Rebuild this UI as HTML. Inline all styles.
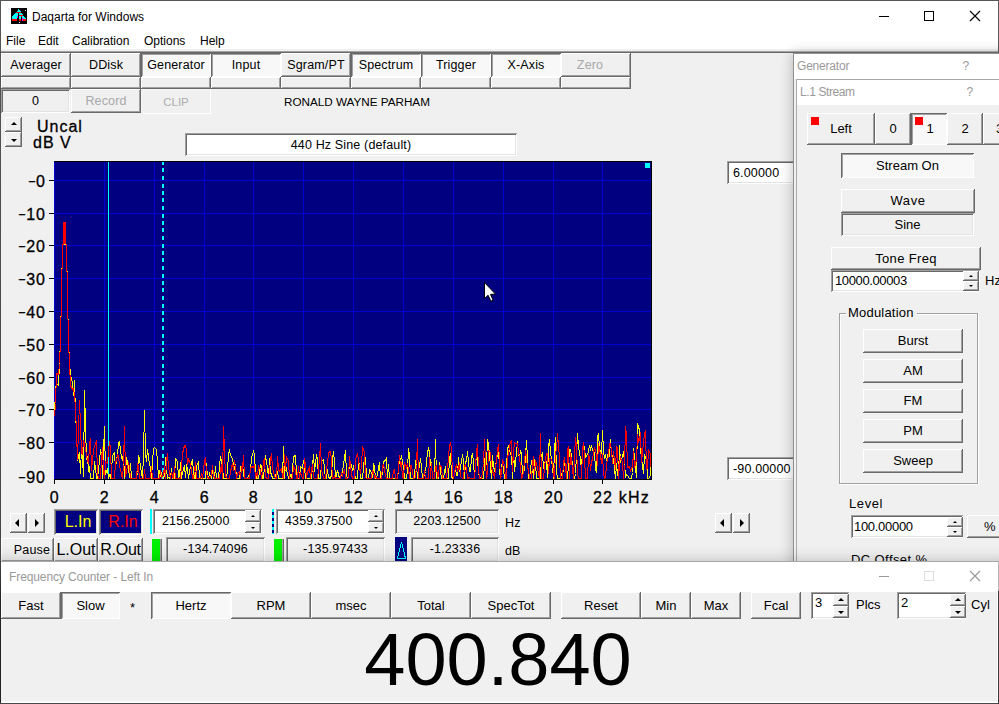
<!DOCTYPE html>
<html><head><meta charset="utf-8"><title>Daqarta for Windows</title>
<style>
html,body{margin:0;padding:0;}
body{width:999px;height:704px;overflow:hidden;position:relative;background:#f0f0f0;font-family:"Liberation Sans",sans-serif;color:#000;}
div,svg.x{position:absolute;}
.x{position:absolute;}
.t{position:absolute;white-space:nowrap;}
.b{position:absolute;text-align:center;white-space:nowrap;overflow:hidden;background:#f0f0f0;}
.r{box-shadow:inset -1px -1px 0 #696969,inset 1px 1px 0 #fff,inset -2px -2px 0 #a0a0a0;}
.p{background:#f8f8f8;box-shadow:inset 1px 1px 0 #696969,inset -1px -1px 0 #fff,inset 2px 2px 0 #a0a0a0;}
.s{box-shadow:inset 1px 1px 0 #a0a0a0,inset -1px -1px 0 #fff,inset 2px 2px 0 #696969,inset -2px -2px 0 #e3e3e3;}
.e{background:#fff;box-shadow:inset 1px 1px 0 #a0a0a0,inset -1px -1px 0 #fff,inset 2px 2px 0 #696969,inset -2px -2px 0 #e3e3e3;}
.f{box-shadow:inset -1px -1px 0 #fff,inset 1px 1px 0 #f6f6f6;}
.tb{font-size:12.5px;letter-spacing:0.15px;}
.a16{font-size:16px;}
.ax{letter-spacing:1px;-webkit-text-stroke:0.3px #000;}
.mn{display:inline-block;transform:translate(1.2px,-1.6px) scale(1.5,0.75);transform-origin:100% 60%;}
.a13{font-size:13px;}
i{position:absolute;width:0;height:0;border:3px solid transparent;left:50%;top:50%;}
i.up{border-bottom:3px solid #000;border-top:0;margin:-2px 0 0 -3px;}
i.dn{border-top:3px solid #000;border-bottom:0;margin:-1px 0 0 -3px;}
i.up.s,i.dn.s{border-width:2px;}
i.up.s{border-bottom:2px solid #000;border-top:0;margin:-1px 0 0 -2px;}
i.dn.s{border-top:2px solid #000;border-bottom:0;margin:-1px 0 0 -2px;}
i.lf{border:4px solid transparent;border-right:4px solid #000;border-left:0;margin:-4px 0 0 -4px;}
i.rt{border:4px solid transparent;border-left:4px solid #000;border-right:0;margin:-4px 0 0 -2px;}
.ttl{font-size:12px;}
</style></head><body>
<!-- main window title + menu -->
<div style="left:0;top:0;width:999px;height:52px;background:#fff;"></div>
<div style="left:0;top:0;width:999px;height:1px;background:#555;"></div>
<div style="left:0;top:0;width:1px;height:704px;background:linear-gradient(#555 0,#444 560px,#222 600px,#222);"></div>
<div style="left:1px;top:562px;width:1px;height:140px;background:#fff;"></div>
<div style="left:998px;top:0;width:1px;height:54px;background:#5a5a5a;"></div>
<div style="left:1px;top:49px;width:997px;height:2px;background:#f0f0f0;"></div>
<div style="left:1px;top:51px;width:997px;height:1px;background:#a0a0a0;"></div>
<div style="left:1px;top:52px;width:998px;height:1px;background:#696969;"></div>
<svg class="x" style="left:11px;top:8px" width="16" height="16" shape-rendering="crispEdges"><rect width="16" height="16" fill="#000"/><rect x="7" y="1" width="1" height="1" fill="#00ffff"/><rect x="7" y="2" width="2" height="1" fill="#00ffff"/><rect x="14" y="2" width="1" height="1" fill="#ffffff"/><rect x="6" y="3" width="4" height="1" fill="#00ffff"/><rect x="5" y="4" width="5" height="1" fill="#ff0000"/><rect x="4" y="5" width="3" height="1" fill="#00ffff"/><rect x="8" y="5" width="3" height="1" fill="#00ffff"/><rect x="3" y="6" width="4" height="1" fill="#00ffff"/><rect x="8" y="6" width="4" height="1" fill="#00ffff"/><rect x="2" y="7" width="5" height="1" fill="#00ffff"/><rect x="8" y="7" width="4" height="1" fill="#ff0000"/><rect x="1" y="8" width="5" height="1" fill="#00ffff"/><rect x="6" y="8" width="1" height="1" fill="#ff00ff"/><rect x="8" y="8" width="2" height="1" fill="#00ffff"/><rect x="10" y="8" width="1" height="1" fill="#ff0000"/><rect x="11" y="8" width="2" height="1" fill="#00ffff"/><rect x="1" y="9" width="5" height="1" fill="#00ffff"/><rect x="6" y="9" width="1" height="1" fill="#ff00ff"/><rect x="8" y="9" width="2" height="1" fill="#00ffff"/><rect x="11" y="9" width="3" height="1" fill="#00ffff"/><rect x="1" y="10" width="5" height="1" fill="#00ffff"/><rect x="8" y="10" width="2" height="1" fill="#00ffff"/><rect x="11" y="10" width="1" height="1" fill="#ff00ff"/><rect x="12" y="10" width="3" height="1" fill="#00ffff"/><rect x="1" y="11" width="5" height="1" fill="#ff0000"/><rect x="8" y="11" width="2" height="1" fill="#ff0000"/><rect x="11" y="11" width="1" height="1" fill="#ff00ff"/><rect x="12" y="11" width="3" height="1" fill="#ff0000"/><rect x="1" y="12" width="5" height="1" fill="#ff0000"/><rect x="8" y="12" width="2" height="1" fill="#ff0000"/><rect x="11" y="12" width="1" height="1" fill="#ff00ff"/><rect x="12" y="12" width="3" height="1" fill="#ff0000"/><rect x="8" y="14" width="1" height="1" fill="#ffffff"/></svg>
<div class="t ttl" style="left:32px;top:10px;">Daqarta for Windows</div>
<div class="t ttl" style="left:6px;top:34px;">File</div>
<div class="t ttl" style="left:38px;top:34px;">Edit</div>
<div class="t ttl" style="left:72px;top:34px;">Calibration</div>
<div class="t ttl" style="left:144px;top:34px;">Options</div>
<div class="t ttl" style="left:200px;top:34px;">Help</div>
<svg class="x" style="left:870px;top:5px" width="120" height="24" shape-rendering="crispEdges"><rect x="9" y="11" width="10" height="1" fill="#000"/><rect x="54.5" y="6.5" width="9" height="9" fill="none" stroke="#000"/><path d="M100 6 L110 16 M110 6 L100 16" stroke="#000" stroke-width="1.1" shape-rendering="auto"/></svg>
<svg style="position:absolute;left:0;top:0" width="999" height="704" shape-rendering="crispEdges">
<rect x="54" y="161" width="598" height="319" fill="#000080"/>
<rect x="54" y="180" width="598" height="1" fill="#0000d2"/><rect x="54" y="213" width="598" height="1" fill="#0000d2"/><rect x="54" y="245" width="598" height="1" fill="#0000d2"/><rect x="54" y="278" width="598" height="1" fill="#0000d2"/><rect x="54" y="311" width="598" height="1" fill="#0000d2"/><rect x="54" y="344" width="598" height="1" fill="#0000d2"/><rect x="54" y="377" width="598" height="1" fill="#0000d2"/><rect x="54" y="409" width="598" height="1" fill="#0000d2"/><rect x="54" y="442" width="598" height="1" fill="#0000d2"/><rect x="54" y="161" width="1" height="319" fill="#0000d2"/><rect x="104" y="161" width="1" height="319" fill="#0000d2"/><rect x="154" y="161" width="1" height="319" fill="#0000d2"/><rect x="204" y="161" width="1" height="319" fill="#0000d2"/><rect x="253" y="161" width="1" height="319" fill="#0000d2"/><rect x="303" y="161" width="1" height="319" fill="#0000d2"/><rect x="353" y="161" width="1" height="319" fill="#0000d2"/><rect x="403" y="161" width="1" height="319" fill="#0000d2"/><rect x="453" y="161" width="1" height="319" fill="#0000d2"/><rect x="503" y="161" width="1" height="319" fill="#0000d2"/><rect x="553" y="161" width="1" height="319" fill="#0000d2"/><rect x="602" y="161" width="1" height="319" fill="#0000d2"/>
<rect x="108" y="161" width="1" height="319" fill="#00ffff"/>
<rect x="162" y="161" width="2" height="4" fill="#00ffff"/><rect x="162" y="168" width="2" height="4" fill="#00ffff"/><rect x="162" y="176" width="2" height="4" fill="#00ffff"/><rect x="162" y="184" width="2" height="4" fill="#00ffff"/><rect x="162" y="191" width="2" height="4" fill="#00ffff"/><rect x="162" y="198" width="2" height="4" fill="#00ffff"/><rect x="162" y="206" width="2" height="4" fill="#00ffff"/><rect x="162" y="214" width="2" height="4" fill="#00ffff"/><rect x="162" y="221" width="2" height="4" fill="#00ffff"/><rect x="162" y="228" width="2" height="4" fill="#00ffff"/><rect x="162" y="236" width="2" height="4" fill="#00ffff"/><rect x="162" y="244" width="2" height="4" fill="#00ffff"/><rect x="162" y="251" width="2" height="4" fill="#00ffff"/><rect x="162" y="258" width="2" height="4" fill="#00ffff"/><rect x="162" y="266" width="2" height="4" fill="#00ffff"/><rect x="162" y="274" width="2" height="4" fill="#00ffff"/><rect x="162" y="281" width="2" height="4" fill="#00ffff"/><rect x="162" y="288" width="2" height="4" fill="#00ffff"/><rect x="162" y="296" width="2" height="4" fill="#00ffff"/><rect x="162" y="304" width="2" height="4" fill="#00ffff"/><rect x="162" y="311" width="2" height="4" fill="#00ffff"/><rect x="162" y="318" width="2" height="4" fill="#00ffff"/><rect x="162" y="326" width="2" height="4" fill="#00ffff"/><rect x="162" y="334" width="2" height="4" fill="#00ffff"/><rect x="162" y="341" width="2" height="4" fill="#00ffff"/><rect x="162" y="348" width="2" height="4" fill="#00ffff"/><rect x="162" y="356" width="2" height="4" fill="#00ffff"/><rect x="162" y="364" width="2" height="4" fill="#00ffff"/><rect x="162" y="371" width="2" height="4" fill="#00ffff"/><rect x="162" y="378" width="2" height="4" fill="#00ffff"/><rect x="162" y="386" width="2" height="4" fill="#00ffff"/><rect x="162" y="394" width="2" height="4" fill="#00ffff"/><rect x="162" y="401" width="2" height="4" fill="#00ffff"/><rect x="162" y="408" width="2" height="4" fill="#00ffff"/><rect x="162" y="416" width="2" height="4" fill="#00ffff"/><rect x="162" y="424" width="2" height="4" fill="#00ffff"/><rect x="162" y="431" width="2" height="4" fill="#00ffff"/><rect x="162" y="438" width="2" height="4" fill="#00ffff"/><rect x="162" y="446" width="2" height="4" fill="#00ffff"/><rect x="162" y="454" width="2" height="4" fill="#00ffff"/><rect x="162" y="461" width="2" height="4" fill="#00ffff"/><rect x="162" y="468" width="2" height="4" fill="#00ffff"/><rect x="162" y="476" width="2" height="4" fill="#00ffff"/>
<polyline points="54.5,415.5 55.5,389.5 56.5,383.5 58.5,385.5 59.5,362.5 60.5,339.5 61.5,294.5 62.5,243.5 63.5,223.5 65.5,223.5 66.5,245.5 67.5,294.5 68.5,341.5 69.5,362.5 70.5,374.5 72.5,383.5 73.5,395.5 74.5,380.5 75.5,414.5 76.5,431.5 77.5,460.5 79.5,452.5 80.5,473.5 81.5,446.5 82.5,458.5 83.5,476.5 84.5,390.5 86.5,459.5 87.5,456.5 88.5,471.5 89.5,466.5 90.5,478.5 91.5,478.5 93.5,478.5 94.5,461.5 95.5,467.5 96.5,478.5 97.5,478.5 98.5,470.5 100.5,449.5 101.5,453.5 102.5,478.5 103.5,451.5 104.5,426.5 105.5,474.5 107.5,468.5 108.5,478.5 109.5,475.5 110.5,478.5 111.5,470.5 112.5,455.5 114.5,452.5 115.5,468.5 116.5,459.5 117.5,455.5 118.5,442.5 119.5,441.5 121.5,457.5 122.5,459.5 123.5,453.5 124.5,478.5 125.5,473.5 126.5,457.5 128.5,467.5 129.5,477.5 130.5,463.5 131.5,478.5 132.5,478.5 133.5,478.5 135.5,478.5 136.5,477.5 137.5,472.5 138.5,456.5 139.5,458.5 140.5,466.5 142.5,478.5 143.5,454.5 144.5,410.5 145.5,453.5 146.5,461.5 147.5,449.5 149.5,464.5 150.5,467.5 151.5,478.5 152.5,461.5 153.5,448.5 154.5,447.5 156.5,449.5 157.5,461.5 158.5,478.5 159.5,470.5 160.5,476.5 161.5,473.5 163.5,478.5 164.5,474.5 165.5,457.5 166.5,469.5 167.5,478.5 168.5,477.5 170.5,478.5 171.5,468.5 172.5,478.5 173.5,478.5 174.5,478.5 175.5,458.5 177.5,461.5 178.5,478.5 179.5,475.5 180.5,462.5 181.5,478.5 182.5,472.5 184.5,465.5 185.5,477.5 186.5,464.5 187.5,469.5 188.5,478.5 189.5,471.5 191.5,462.5 192.5,460.5 193.5,470.5 194.5,478.5 195.5,478.5 196.5,466.5 198.5,461.5 199.5,478.5 200.5,478.5 201.5,478.5 202.5,478.5 204.5,478.5 205.5,478.5 206.5,463.5 207.5,478.5 208.5,478.5 209.5,473.5 211.5,478.5 212.5,469.5 213.5,478.5 214.5,478.5 215.5,466.5 216.5,478.5 218.5,478.5 219.5,465.5 220.5,456.5 221.5,460.5 222.5,467.5 223.5,478.5 225.5,478.5 226.5,478.5 227.5,469.5 228.5,455.5 229.5,449.5 230.5,455.5 232.5,458.5 233.5,465.5 234.5,468.5 235.5,464.5 236.5,478.5 237.5,478.5 239.5,478.5 240.5,466.5 241.5,472.5 242.5,463.5 243.5,474.5 244.5,478.5 246.5,478.5 247.5,478.5 248.5,475.5 249.5,474.5 250.5,471.5 251.5,457.5 253.5,451.5 254.5,454.5 255.5,472.5 256.5,478.5 257.5,478.5 258.5,478.5 260.5,464.5 261.5,465.5 262.5,478.5 263.5,478.5 264.5,465.5 265.5,455.5 267.5,467.5 268.5,478.5 269.5,458.5 270.5,472.5 271.5,474.5 272.5,478.5 274.5,478.5 275.5,478.5 276.5,470.5 277.5,471.5 278.5,478.5 279.5,478.5 281.5,478.5 282.5,478.5 283.5,446.5 284.5,478.5 285.5,463.5 286.5,469.5 288.5,478.5 289.5,478.5 290.5,475.5 291.5,477.5 292.5,470.5 293.5,456.5 295.5,455.5 296.5,473.5 297.5,478.5 298.5,478.5 299.5,478.5 300.5,466.5 302.5,468.5 303.5,460.5 304.5,466.5 305.5,478.5 306.5,478.5 307.5,478.5 309.5,478.5 310.5,478.5 311.5,478.5 312.5,465.5 313.5,454.5 314.5,471.5 316.5,454.5 317.5,458.5 318.5,478.5 319.5,478.5 320.5,478.5 321.5,461.5 323.5,459.5 324.5,468.5 325.5,478.5 326.5,478.5 327.5,469.5 328.5,477.5 330.5,478.5 331.5,474.5 332.5,459.5 333.5,451.5 334.5,461.5 335.5,478.5 337.5,470.5 338.5,474.5 339.5,478.5 340.5,478.5 341.5,474.5 342.5,471.5 344.5,457.5 345.5,450.5 346.5,475.5 347.5,478.5 348.5,476.5 349.5,461.5 351.5,465.5 352.5,470.5 353.5,465.5 354.5,474.5 355.5,478.5 357.5,478.5 358.5,462.5 359.5,463.5 360.5,478.5 361.5,478.5 362.5,478.5 364.5,456.5 365.5,457.5 366.5,478.5 367.5,478.5 368.5,478.5 369.5,469.5 371.5,472.5 372.5,477.5 373.5,464.5 374.5,466.5 375.5,478.5 376.5,478.5 378.5,468.5 379.5,462.5 380.5,478.5 381.5,474.5 382.5,474.5 383.5,461.5 385.5,460.5 386.5,458.5 387.5,478.5 388.5,464.5 389.5,478.5 390.5,478.5 392.5,478.5 393.5,478.5 394.5,478.5 395.5,478.5 396.5,478.5 397.5,478.5 399.5,459.5 400.5,459.5 401.5,456.5 402.5,461.5 403.5,467.5 404.5,478.5 406.5,478.5 407.5,469.5 408.5,448.5 409.5,454.5 410.5,478.5 411.5,478.5 413.5,478.5 414.5,478.5 415.5,460.5 416.5,465.5 417.5,478.5 418.5,471.5 420.5,458.5 421.5,467.5 422.5,478.5 423.5,478.5 424.5,473.5 425.5,471.5 427.5,452.5 428.5,448.5 429.5,451.5 430.5,465.5 431.5,462.5 432.5,478.5 434.5,478.5 435.5,439.5 436.5,478.5 437.5,473.5 438.5,478.5 439.5,462.5 441.5,478.5 442.5,478.5 443.5,478.5 444.5,471.5 445.5,466.5 446.5,478.5 448.5,478.5 449.5,458.5 450.5,453.5 451.5,476.5 452.5,478.5 453.5,478.5 455.5,467.5 456.5,475.5 457.5,475.5 458.5,457.5 459.5,471.5 460.5,467.5 462.5,454.5 463.5,461.5 464.5,478.5 465.5,461.5 466.5,461.5 467.5,451.5 469.5,471.5 470.5,471.5 471.5,456.5 472.5,454.5 473.5,460.5 474.5,478.5 476.5,454.5 477.5,459.5 478.5,472.5 479.5,476.5 480.5,478.5 481.5,478.5 483.5,478.5 484.5,463.5 485.5,453.5 486.5,464.5 487.5,439.5 488.5,444.5 490.5,466.5 491.5,478.5 492.5,455.5 493.5,466.5 494.5,471.5 495.5,465.5 497.5,454.5 498.5,447.5 499.5,470.5 500.5,478.5 501.5,466.5 502.5,461.5 504.5,478.5 505.5,477.5 506.5,467.5 507.5,448.5 508.5,446.5 510.5,453.5 511.5,451.5 512.5,478.5 513.5,448.5 514.5,471.5 515.5,462.5 517.5,441.5 518.5,453.5 519.5,457.5 520.5,450.5 521.5,453.5 522.5,475.5 524.5,469.5 525.5,456.5 526.5,440.5 527.5,459.5 528.5,478.5 529.5,478.5 531.5,460.5 532.5,466.5 533.5,478.5 534.5,459.5 535.5,462.5 536.5,478.5 538.5,478.5 539.5,478.5 540.5,478.5 541.5,455.5 542.5,452.5 543.5,468.5 545.5,459.5 546.5,462.5 547.5,477.5 548.5,447.5 549.5,439.5 550.5,451.5 552.5,467.5 553.5,478.5 554.5,448.5 555.5,437.5 556.5,470.5 557.5,478.5 559.5,478.5 560.5,478.5 561.5,473.5 562.5,477.5 563.5,467.5 564.5,463.5 566.5,473.5 567.5,478.5 568.5,464.5 569.5,449.5 570.5,449.5 571.5,455.5 573.5,478.5 574.5,478.5 575.5,473.5 576.5,454.5 577.5,433.5 578.5,446.5 580.5,458.5 581.5,470.5 582.5,448.5 583.5,443.5 584.5,447.5 585.5,457.5 587.5,454.5 588.5,451.5 589.5,445.5 590.5,449.5 591.5,446.5 592.5,449.5 594.5,453.5 595.5,468.5 596.5,472.5 597.5,437.5 598.5,433.5 599.5,448.5 601.5,453.5 602.5,430.5 603.5,451.5 604.5,457.5 605.5,455.5 606.5,460.5 608.5,451.5 609.5,456.5 610.5,439.5 611.5,453.5 612.5,456.5 613.5,459.5 615.5,478.5 616.5,463.5 617.5,473.5 618.5,478.5 619.5,445.5 620.5,462.5 622.5,456.5 623.5,451.5 624.5,462.5 625.5,476.5 626.5,474.5 627.5,475.5 629.5,478.5 630.5,478.5 631.5,478.5 632.5,472.5 633.5,448.5 634.5,457.5 636.5,477.5 637.5,423.5 638.5,427.5 639.5,429.5 640.5,449.5 641.5,457.5 643.5,473.5 644.5,454.5 645.5,458.5 646.5,453.5 647.5,478.5 648.5,478.5 650.5,475.5 651.5,451.5" fill="none" stroke="#ffff00" stroke-width="1"/>
<polyline points="54.5,416.5 55.5,403.5 56.5,373.5 58.5,374.5 59.5,363.5 60.5,340.5 61.5,295.5 62.5,243.5 63.5,224.5 65.5,225.5 66.5,245.5 67.5,296.5 68.5,341.5 69.5,364.5 70.5,385.5 72.5,389.5 73.5,388.5 74.5,395.5 75.5,407.5 76.5,434.5 77.5,459.5 79.5,400.5 80.5,425.5 81.5,453.5 82.5,454.5 83.5,440.5 84.5,444.5 86.5,454.5 87.5,460.5 88.5,463.5 89.5,444.5 90.5,438.5 91.5,470.5 93.5,450.5 94.5,445.5 95.5,444.5 96.5,440.5 97.5,473.5 98.5,478.5 100.5,478.5 101.5,458.5 102.5,447.5 103.5,471.5 104.5,478.5 105.5,461.5 107.5,463.5 108.5,451.5 109.5,441.5 110.5,448.5 111.5,478.5 112.5,478.5 114.5,478.5 115.5,461.5 116.5,461.5 117.5,454.5 118.5,455.5 119.5,465.5 121.5,474.5 122.5,478.5 123.5,464.5 124.5,426.5 125.5,476.5 126.5,471.5 128.5,462.5 129.5,466.5 130.5,478.5 131.5,478.5 132.5,478.5 133.5,478.5 135.5,478.5 136.5,478.5 137.5,463.5 138.5,466.5 139.5,478.5 140.5,478.5 142.5,478.5 143.5,478.5 144.5,469.5 145.5,478.5 146.5,478.5 147.5,478.5 149.5,478.5 150.5,477.5 151.5,466.5 152.5,478.5 153.5,478.5 154.5,478.5 156.5,478.5 157.5,478.5 158.5,478.5 159.5,478.5 160.5,470.5 161.5,478.5 163.5,473.5 164.5,466.5 165.5,478.5 166.5,461.5 167.5,453.5 168.5,467.5 170.5,478.5 171.5,472.5 172.5,476.5 173.5,478.5 174.5,466.5 175.5,478.5 177.5,478.5 178.5,478.5 179.5,478.5 180.5,478.5 181.5,466.5 182.5,453.5 184.5,445.5 185.5,445.5 186.5,450.5 187.5,464.5 188.5,459.5 189.5,461.5 191.5,468.5 192.5,478.5 193.5,478.5 194.5,471.5 195.5,462.5 196.5,478.5 198.5,478.5 199.5,478.5 200.5,478.5 201.5,473.5 202.5,478.5 204.5,460.5 205.5,458.5 206.5,473.5 207.5,476.5 208.5,478.5 209.5,478.5 211.5,475.5 212.5,465.5 213.5,474.5 214.5,478.5 215.5,478.5 216.5,478.5 218.5,478.5 219.5,478.5 220.5,469.5 221.5,464.5 222.5,478.5 223.5,426.5 225.5,475.5 226.5,477.5 227.5,478.5 228.5,478.5 229.5,478.5 230.5,471.5 232.5,463.5 233.5,470.5 234.5,460.5 235.5,469.5 236.5,478.5 237.5,473.5 239.5,471.5 240.5,478.5 241.5,467.5 242.5,469.5 243.5,455.5 244.5,478.5 246.5,478.5 247.5,478.5 248.5,478.5 249.5,478.5 250.5,468.5 251.5,466.5 253.5,467.5 254.5,464.5 255.5,478.5 256.5,473.5 257.5,477.5 258.5,465.5 260.5,470.5 261.5,478.5 262.5,471.5 263.5,461.5 264.5,459.5 265.5,477.5 267.5,478.5 268.5,478.5 269.5,470.5 270.5,459.5 271.5,453.5 272.5,468.5 274.5,475.5 275.5,478.5 276.5,478.5 277.5,456.5 278.5,469.5 279.5,471.5 281.5,468.5 282.5,477.5 283.5,478.5 284.5,454.5 285.5,469.5 286.5,456.5 288.5,461.5 289.5,478.5 290.5,478.5 291.5,478.5 292.5,478.5 293.5,466.5 295.5,470.5 296.5,478.5 297.5,478.5 298.5,466.5 299.5,478.5 300.5,472.5 302.5,478.5 303.5,478.5 304.5,458.5 305.5,464.5 306.5,478.5 307.5,471.5 309.5,467.5 310.5,478.5 311.5,469.5 312.5,464.5 313.5,477.5 314.5,478.5 316.5,478.5 317.5,478.5 318.5,470.5 319.5,458.5 320.5,443.5 321.5,469.5 323.5,478.5 324.5,478.5 325.5,478.5 326.5,469.5 327.5,463.5 328.5,452.5 330.5,451.5 331.5,460.5 332.5,478.5 333.5,478.5 334.5,476.5 335.5,478.5 337.5,478.5 338.5,478.5 339.5,478.5 340.5,478.5 341.5,472.5 342.5,475.5 344.5,469.5 345.5,478.5 346.5,478.5 347.5,478.5 348.5,477.5 349.5,456.5 351.5,474.5 352.5,478.5 353.5,478.5 354.5,478.5 355.5,459.5 357.5,453.5 358.5,460.5 359.5,467.5 360.5,473.5 361.5,465.5 362.5,446.5 364.5,452.5 365.5,477.5 366.5,478.5 367.5,478.5 368.5,478.5 369.5,478.5 371.5,478.5 372.5,470.5 373.5,471.5 374.5,478.5 375.5,476.5 376.5,478.5 378.5,478.5 379.5,478.5 380.5,478.5 381.5,478.5 382.5,465.5 383.5,464.5 385.5,475.5 386.5,478.5 387.5,478.5 388.5,478.5 389.5,478.5 390.5,478.5 392.5,478.5 393.5,470.5 394.5,469.5 395.5,478.5 396.5,478.5 397.5,478.5 399.5,455.5 400.5,465.5 401.5,463.5 402.5,477.5 403.5,478.5 404.5,462.5 406.5,467.5 407.5,463.5 408.5,469.5 409.5,478.5 410.5,465.5 411.5,465.5 413.5,478.5 414.5,478.5 415.5,477.5 416.5,464.5 417.5,439.5 418.5,478.5 420.5,478.5 421.5,478.5 422.5,478.5 423.5,478.5 424.5,470.5 425.5,478.5 427.5,478.5 428.5,478.5 429.5,457.5 430.5,478.5 431.5,463.5 432.5,478.5 434.5,478.5 435.5,466.5 436.5,465.5 437.5,478.5 438.5,474.5 439.5,465.5 441.5,466.5 442.5,478.5 443.5,478.5 444.5,478.5 445.5,478.5 446.5,478.5 448.5,457.5 449.5,445.5 450.5,442.5 451.5,448.5 452.5,474.5 453.5,478.5 455.5,467.5 456.5,464.5 457.5,470.5 458.5,468.5 459.5,462.5 460.5,476.5 462.5,478.5 463.5,478.5 464.5,465.5 465.5,464.5 466.5,468.5 467.5,478.5 469.5,477.5 470.5,478.5 471.5,478.5 472.5,478.5 473.5,478.5 474.5,478.5 476.5,452.5 477.5,444.5 478.5,469.5 479.5,478.5 480.5,478.5 481.5,478.5 483.5,463.5 484.5,439.5 485.5,462.5 486.5,478.5 487.5,475.5 488.5,450.5 490.5,452.5 491.5,467.5 492.5,471.5 493.5,473.5 494.5,478.5 495.5,468.5 497.5,450.5 498.5,444.5 499.5,458.5 500.5,478.5 501.5,475.5 502.5,459.5 504.5,465.5 505.5,478.5 506.5,478.5 507.5,457.5 508.5,453.5 510.5,441.5 511.5,440.5 512.5,471.5 513.5,451.5 514.5,442.5 515.5,443.5 517.5,443.5 518.5,452.5 519.5,457.5 520.5,466.5 521.5,478.5 522.5,477.5 524.5,462.5 525.5,450.5 526.5,457.5 527.5,467.5 528.5,469.5 529.5,478.5 531.5,478.5 532.5,463.5 533.5,456.5 534.5,474.5 535.5,460.5 536.5,463.5 538.5,473.5 539.5,478.5 540.5,433.5 541.5,478.5 542.5,478.5 543.5,478.5 545.5,458.5 546.5,453.5 547.5,453.5 548.5,473.5 549.5,458.5 550.5,458.5 552.5,461.5 553.5,474.5 554.5,478.5 555.5,451.5 556.5,450.5 557.5,433.5 559.5,457.5 560.5,478.5 561.5,478.5 562.5,478.5 563.5,462.5 564.5,457.5 566.5,478.5 567.5,450.5 568.5,446.5 569.5,478.5 570.5,452.5 571.5,460.5 573.5,478.5 574.5,455.5 575.5,437.5 576.5,446.5 577.5,472.5 578.5,478.5 580.5,478.5 581.5,478.5 582.5,450.5 583.5,442.5 584.5,456.5 585.5,478.5 587.5,478.5 588.5,455.5 589.5,457.5 590.5,470.5 591.5,461.5 592.5,459.5 594.5,447.5 595.5,450.5 596.5,455.5 597.5,465.5 598.5,443.5 599.5,448.5 601.5,463.5 602.5,453.5 603.5,473.5 604.5,478.5 605.5,477.5 606.5,464.5 608.5,455.5 609.5,443.5 610.5,443.5 611.5,450.5 612.5,463.5 613.5,451.5 615.5,469.5 616.5,446.5 617.5,447.5 618.5,478.5 619.5,463.5 620.5,457.5 622.5,462.5 623.5,478.5 624.5,464.5 625.5,426.5 626.5,434.5 627.5,467.5 629.5,466.5 630.5,471.5 631.5,467.5 632.5,467.5 633.5,451.5 634.5,467.5 636.5,459.5 637.5,434.5 638.5,441.5 639.5,439.5 640.5,432.5 641.5,462.5 643.5,441.5 644.5,434.5 645.5,430.5 646.5,469.5 647.5,468.5 648.5,449.5 650.5,454.5 651.5,478.5" fill="none" stroke="#ff0000" stroke-width="1"/>
<rect x="61" y="222" width="2" height="22" fill="#000080"/><rect x="66" y="222" width="2" height="22" fill="#000080"/><rect x="63" y="222" width="3" height="23" fill="#ff0000"/><rect x="64" y="244" width="2" height="1" fill="#ffff00"/>
<rect x="54" y="161" width="598" height="1" fill="#000"/>
<rect x="651" y="161" width="1" height="319" fill="#000"/>
<rect x="54" y="479" width="598" height="1" fill="#000"/>
<rect x="645" y="163" width="5" height="5" fill="#00ffff"/>
<path d="M484.5 282.6 L484.5 298.6 L488.1 295.2 L490.9 301.2 L493.1 300.2 L490.5 294.4 L495.5 294.1 Z" fill="#fff" stroke="#000" stroke-width="1" stroke-linejoin="miter" shape-rendering="auto"/>
</svg>
<div class="b r tb" style="left:1px;top:53px;width:70px;height:24px;line-height:24px;">Averager</div><div class="b r" style="left:1px;top:77px;width:70px;height:12px;line-height:12px;"></div><div class="b r tb" style="left:71px;top:53px;width:70px;height:24px;line-height:24px;">DDisk</div><div class="b r" style="left:71px;top:77px;width:70px;height:12px;line-height:12px;"></div><div class="b p tb" style="left:141px;top:53px;width:70px;height:24px;line-height:24px;">Generator</div><div class="b r" style="left:141px;top:77px;width:70px;height:12px;line-height:12px;"></div><div class="b p tb" style="left:211px;top:53px;width:70px;height:24px;line-height:24px;">Input</div><div class="b r" style="left:211px;top:77px;width:70px;height:12px;line-height:12px;"></div><div class="b r tb" style="left:281px;top:53px;width:70px;height:24px;line-height:24px;">Sgram/PT</div><div class="b r" style="left:281px;top:77px;width:70px;height:12px;line-height:12px;"></div><div class="b p tb" style="left:351px;top:53px;width:70px;height:24px;line-height:24px;">Spectrum</div><div class="b r" style="left:351px;top:77px;width:70px;height:12px;line-height:12px;"></div><div class="b p tb" style="left:421px;top:53px;width:70px;height:24px;line-height:24px;">Trigger</div><div class="b r" style="left:421px;top:77px;width:70px;height:12px;line-height:12px;"></div><div class="b p tb" style="left:491px;top:53px;width:70px;height:24px;line-height:24px;">X-Axis</div><div class="b r" style="left:491px;top:77px;width:70px;height:12px;line-height:12px;"></div><div class="b r tb" style="left:561px;top:53px;width:70px;height:24px;line-height:24px;color:#a8a8a8;padding-right:12px;box-sizing:border-box;">Zero</div><div class="b r" style="left:561px;top:77px;width:70px;height:12px;line-height:12px;"></div><div class="b s tb" style="left:1px;top:89px;width:69px;height:24px;line-height:24px;">0</div><div class="b r tb" style="left:71px;top:89px;width:70px;height:24px;line-height:24px;color:#a8a8a8;">Record</div><div class="b f" style="left:141px;top:89px;width:70px;height:24px;line-height:24px;color:#adadad;font-size:11.5px;padding-top:1px;">CLIP</div><div class="t" style="left:284px;top:95px;font-size:11.7px;">RONALD WAYNE PARHAM</div><div class="b r" style="left:5px;top:117px;width:17px;height:15px;line-height:15px;"><i class="up" style="margin-top:-3px"></i></div><div class="b r" style="left:5px;top:132px;width:17px;height:15px;line-height:15px;"><i class="dn"></i></div><div class="t a16 ax" style="left:37px;top:118px;">Uncal</div><div class="t a16 ax" style="left:33px;top:134px;">dB V</div><div class="b e tb" style="left:185px;top:133px;width:332px;height:23px;line-height:23px;text-align:center;padding-top:1px;box-sizing:border-box;">440 Hz Sine (default)</div><div class="t a16 ax" style="left:0px;top:173px;width:46px;text-align:right;"><span class="mn">-</span>0</div><div class="x" style="left:49px;top:180px;width:5px;height:1px;background:#000"></div><div class="t a16 ax" style="left:0px;top:206px;width:46px;text-align:right;"><span class="mn">-</span>10</div><div class="x" style="left:49px;top:213px;width:5px;height:1px;background:#000"></div><div class="t a16 ax" style="left:0px;top:238px;width:46px;text-align:right;"><span class="mn">-</span>20</div><div class="x" style="left:49px;top:245px;width:5px;height:1px;background:#000"></div><div class="t a16 ax" style="left:0px;top:271px;width:46px;text-align:right;"><span class="mn">-</span>30</div><div class="x" style="left:49px;top:278px;width:5px;height:1px;background:#000"></div><div class="t a16 ax" style="left:0px;top:304px;width:46px;text-align:right;"><span class="mn">-</span>40</div><div class="x" style="left:49px;top:311px;width:5px;height:1px;background:#000"></div><div class="t a16 ax" style="left:0px;top:337px;width:46px;text-align:right;"><span class="mn">-</span>50</div><div class="x" style="left:49px;top:344px;width:5px;height:1px;background:#000"></div><div class="t a16 ax" style="left:0px;top:370px;width:46px;text-align:right;"><span class="mn">-</span>60</div><div class="x" style="left:49px;top:377px;width:5px;height:1px;background:#000"></div><div class="t a16 ax" style="left:0px;top:402px;width:46px;text-align:right;"><span class="mn">-</span>70</div><div class="x" style="left:49px;top:409px;width:5px;height:1px;background:#000"></div><div class="t a16 ax" style="left:0px;top:435px;width:46px;text-align:right;"><span class="mn">-</span>80</div><div class="x" style="left:49px;top:442px;width:5px;height:1px;background:#000"></div><div class="t a16 ax" style="left:0px;top:469px;width:46px;text-align:right;"><span class="mn">-</span>90</div><div class="t a16 ax" style="left:24.3px;top:489px;width:61px;text-align:center;">0</div><div class="x" style="left:54px;top:480px;width:1px;height:4px;background:#000"></div><div class="t a16 ax" style="left:74.3px;top:489px;width:61px;text-align:center;">2</div><div class="x" style="left:104px;top:480px;width:1px;height:4px;background:#000"></div><div class="t a16 ax" style="left:124.3px;top:489px;width:61px;text-align:center;">4</div><div class="x" style="left:154px;top:480px;width:1px;height:4px;background:#000"></div><div class="t a16 ax" style="left:174.3px;top:489px;width:61px;text-align:center;">6</div><div class="x" style="left:204px;top:480px;width:1px;height:4px;background:#000"></div><div class="t a16 ax" style="left:223.3px;top:489px;width:61px;text-align:center;">8</div><div class="x" style="left:253px;top:480px;width:1px;height:4px;background:#000"></div><div class="t a16 ax" style="left:273.3px;top:489px;width:61px;text-align:center;">10</div><div class="x" style="left:303px;top:480px;width:1px;height:4px;background:#000"></div><div class="t a16 ax" style="left:323.3px;top:489px;width:61px;text-align:center;">12</div><div class="x" style="left:353px;top:480px;width:1px;height:4px;background:#000"></div><div class="t a16 ax" style="left:373.3px;top:489px;width:61px;text-align:center;">14</div><div class="x" style="left:403px;top:480px;width:1px;height:4px;background:#000"></div><div class="t a16 ax" style="left:423.3px;top:489px;width:61px;text-align:center;">16</div><div class="x" style="left:453px;top:480px;width:1px;height:4px;background:#000"></div><div class="t a16 ax" style="left:473.3px;top:489px;width:61px;text-align:center;">18</div><div class="x" style="left:503px;top:480px;width:1px;height:4px;background:#000"></div><div class="t a16 ax" style="left:523.3px;top:489px;width:61px;text-align:center;">20</div><div class="x" style="left:553px;top:480px;width:1px;height:4px;background:#000"></div><div class="t a16 ax" style="left:593px;top:489px;letter-spacing:1.2px;">22 kHz</div><div class="x" style="left:602px;top:480px;width:1px;height:4px;background:#000"></div><div class="b e tb" style="left:727px;top:161px;width:80px;height:23px;line-height:23px;text-align:left;padding-left:6px;padding-top:1px;box-sizing:border-box;">6.00000</div><div class="b e tb" style="left:727px;top:457px;width:80px;height:23px;line-height:23px;text-align:left;padding-left:6px;padding-top:1px;box-sizing:border-box;">-90.00000</div><div class="b r" style="left:10px;top:513px;width:17px;height:20px;line-height:20px;"><i class="lf"></i></div><div class="b r" style="left:28px;top:513px;width:17px;height:20px;line-height:20px;"><i class="rt"></i></div><div class="b s a16" style="left:54px;top:509px;width:44px;height:26px;line-height:26px;background:#000080;color:#ffff00;padding-left:4px;box-sizing:border-box;">L.In</div><div class="b s a16" style="left:99px;top:509px;width:44px;height:26px;line-height:26px;background:#000080;color:#ff0000;padding-left:4px;box-sizing:border-box;">R.In</div><div class="x" style="left:150px;top:509px;width:2px;height:25px;background:#00ffff"></div><div class="b e tb" style="left:153px;top:509px;width:109px;height:25px;line-height:25px;text-align:left;padding-left:9px;box-sizing:border-box;">2156.25000</div><div class="b r" style="left:245px;top:510px;width:16px;height:12px;line-height:12px;"><i class="up s"></i></div><div class="b r" style="left:245px;top:522px;width:16px;height:11px;line-height:11px;"><i class="dn s"></i></div><div class="x" style="left:272px;top:509px;width:2px;height:25px;background:repeating-linear-gradient(#00ffff 0 3px,#000080 3px 6px)"></div><div class="b e tb" style="left:276px;top:509px;width:109px;height:25px;line-height:25px;text-align:left;padding-left:9px;box-sizing:border-box;">4359.37500</div><div class="b r" style="left:368px;top:510px;width:16px;height:12px;line-height:12px;"><i class="up s"></i></div><div class="b r" style="left:368px;top:522px;width:16px;height:11px;line-height:11px;"><i class="dn s"></i></div><div class="b s tb" style="left:395px;top:509px;width:104px;height:25px;line-height:25px;">2203.12500</div><div class="t tb" style="left:505px;top:516px;">Hz</div><div class="b r" style="left:715px;top:513px;width:17px;height:20px;line-height:20px;"><i class="lf"></i></div><div class="b r" style="left:733px;top:513px;width:17px;height:20px;line-height:20px;"><i class="rt"></i></div><div class="b r tb" style="left:1px;top:538px;width:53px;height:24px;line-height:24px;text-align:right;padding-right:4px;box-sizing:border-box;">Pause</div><div class="b r a16" style="left:54px;top:538px;width:44px;height:24px;line-height:24px;">L.Out</div><div class="b r a16" style="left:98px;top:538px;width:45px;height:24px;line-height:24px;letter-spacing:-0.3px;">R.Out</div><div class="x" style="left:152px;top:539px;width:8px;height:23px;background:#00f000;box-shadow:1px 0 0 #a0a0a0,2px 0 0 #696969"></div><div class="b s tb" style="left:166px;top:537px;width:99px;height:25px;line-height:25px;">-134.74096</div><div class="x" style="left:274px;top:539px;width:8px;height:23px;background:#00f000;box-shadow:1px 0 0 #a0a0a0,2px 0 0 #696969"></div><div class="b s tb" style="left:286px;top:537px;width:99px;height:25px;line-height:25px;">-135.97433</div><div class="x" style="left:395px;top:537px;width:12px;height:25px;background:#000080"></div><svg class="x" style="left:395px;top:537px" width="12" height="25"><path d="M6.5 5 L2.5 21.5 L10.5 21.5 Z" fill="none" stroke="#00ffff" stroke-width="1" shape-rendering="crispEdges"/></svg><div class="b s tb" style="left:411px;top:537px;width:88px;height:25px;line-height:25px;">-1.23336</div><div class="t tb" style="left:505px;top:544px;">dB</div>
<!-- generator window -->
<div style="left:0;top:36px;width:999px;height:15px;overflow:hidden;"><div style="left:793px;top:17px;width:300px;height:600px;box-shadow:0 0 13px rgba(0,0,0,0.22);"></div></div>
<div style="left:770px;top:53px;width:23px;height:509px;overflow:hidden;"><div style="left:23px;top:0px;width:300px;height:600px;box-shadow:0 0 13px rgba(0,0,0,0.26);"></div></div>
<div style="left:793px;top:53px;width:206px;height:509px;background:#f0f0f0;"></div>
<div style="left:793px;top:53px;width:1px;height:509px;background:#919191;"></div>
<div style="left:793px;top:53px;width:206px;height:1px;background:#919191;"></div>
<div style="left:794px;top:54px;width:205px;height:25px;background:#fff;"></div>
<div style="left:796px;top:79px;width:203px;height:483px;background:#f0f0f0;"></div>
<div style="left:796px;top:79px;width:203px;height:1px;background:#aaa;"></div>
<div style="left:796px;top:79px;width:1px;height:483px;background:#aaa;"></div>
<div style="left:797px;top:80px;width:202px;height:25px;background:#fff;"></div>
<div class="t ttl" style="left:797px;top:59px;color:#999;letter-spacing:-0.2px;">Generator</div>
<div class="t ttl" style="left:962.5px;top:59px;color:#999;">?</div>
<div class="t ttl" style="left:800px;top:85px;color:#999;letter-spacing:-0.4px;">L.1 Stream</div>
<div class="t ttl" style="left:966.5px;top:85px;color:#999;">?</div>
<div class="b r a13" style="left:807px;top:113px;width:68px;height:32px;line-height:32px;">Left</div><div class="b r a13" style="left:875px;top:113px;width:36px;height:32px;line-height:32px;">0</div><div class="b p a13" style="left:911px;top:113px;width:36px;height:32px;line-height:32px;padding-left:2px;box-sizing:border-box;">1</div><div class="b r a13" style="left:947px;top:113px;width:36px;height:32px;line-height:32px;">2</div><div class="b r a13" style="left:983px;top:113px;width:36px;height:32px;line-height:32px;text-indent:-3px;">3</div><div class="x" style="left:811px;top:117px;width:8px;height:8px;background:#ff0000"></div><div class="x" style="left:915px;top:117px;width:8px;height:8px;background:#ff0000"></div><div class="b p a13" style="left:841px;top:153px;width:133px;height:25px;line-height:25px;">Stream On</div><div class="b r a13" style="left:841px;top:189px;width:134px;height:24px;line-height:24px;letter-spacing:0.6px;">Wave</div><div class="b s a13" style="left:841px;top:213px;width:133px;height:23px;line-height:23px;">Sine</div><div class="b r a13" style="left:831px;top:247px;width:150px;height:23px;line-height:23px;letter-spacing:0.35px;">Tone Freq</div><div class="b e a13" style="left:831px;top:270px;width:149px;height:22px;line-height:22px;text-align:left;padding-left:4px;box-sizing:border-box;letter-spacing:-0.38px;">10000.00003</div><div class="b r" style="left:963px;top:271px;width:16px;height:10px;line-height:10px;"><i class="up s"></i></div><div class="b r" style="left:963px;top:281px;width:16px;height:10px;line-height:10px;"><i class="dn s"></i></div><div class="t a13" style="left:985px;top:273px;">Hz</div><div class="x" style="left:839px;top:313px;width:139px;height:171px;border:1px solid #a0a0a0;box-sizing:border-box;box-shadow:1px 1px 0 #fff,inset 1px 1px 0 #fff;"></div><div class="t a13" style="left:846px;top:305px;background:#f0f0f0;padding:0 3px 0 2px;letter-spacing:0.2px;">Modulation</div><div class="b r a13" style="left:863px;top:329px;width:100px;height:24px;line-height:24px;">Burst</div><div class="b r a13" style="left:863px;top:359px;width:100px;height:24px;line-height:24px;">AM</div><div class="b r a13" style="left:863px;top:389px;width:100px;height:24px;line-height:24px;">FM</div><div class="b r a13" style="left:863px;top:419px;width:100px;height:24px;line-height:24px;">PM</div><div class="b r a13" style="left:863px;top:449px;width:100px;height:24px;line-height:24px;">Sweep</div><div class="t a13" style="left:849px;top:496px;letter-spacing:0.6px;">Level</div><div class="b e a13" style="left:851px;top:515px;width:112px;height:23px;line-height:23px;text-align:left;padding-left:3px;box-sizing:border-box;letter-spacing:-0.3px;">100.00000</div><div class="b r" style="left:947px;top:517px;width:16px;height:10px;line-height:10px;"><i class="up s"></i></div><div class="b r" style="left:947px;top:527px;width:16px;height:10px;line-height:10px;"><i class="dn s"></i></div><div class="b r a13" style="left:967px;top:515px;width:50px;height:23px;line-height:23px;text-align:left;padding-left:17px;box-sizing:border-box;">%</div><div class="t a13" style="left:851px;top:552px;letter-spacing:0.4px;">DC Offset %</div>
<!-- frequency counter window -->
<div style="left:1px;top:546px;width:998px;height:15px;background:linear-gradient(rgba(0,0,0,0),rgba(0,0,0,0.035) 50%,rgba(0,0,0,0.11));"></div>
<div style="left:1px;top:561px;width:998px;height:1px;background:#a8a8a8;"></div>
<div style="left:1px;top:562px;width:998px;height:141px;background:#f0f0f0;"></div>
<div style="left:1px;top:562px;width:998px;height:30px;background:#fff;"></div>
<div style="left:1px;top:701px;width:998px;height:2px;background:linear-gradient(#f8f8f8 50%,#fff 50%);"></div>
<div style="left:0px;top:703px;width:999px;height:1px;background:#4a4a4a;"></div>
<div style="left:997px;top:592px;width:1px;height:111px;background:#fff;"></div>
<div style="left:998px;top:561px;width:1px;height:30px;background:#b4b4b4;"></div>
<div style="left:998px;top:591px;width:1px;height:113px;background:#3a3a3a;"></div>
<div class="t ttl" style="left:9px;top:570px;color:#999;letter-spacing:-0.1px;">Frequency Counter - Left In</div>
<svg class="x" style="left:870px;top:565px" width="120" height="24"><rect x="9" y="11" width="10" height="1" fill="#999" shape-rendering="crispEdges"/><rect x="54.5" y="6.5" width="9" height="9" fill="none" stroke="#ddd" shape-rendering="crispEdges"/><path d="M100 6 L110 16 M110 6 L100 16" stroke="#999" stroke-width="1.1"/></svg>
<div class="b r a13" style="left:1px;top:592px;width:60px;height:27px;line-height:27px;">Fast</div><div class="b p a13" style="left:61px;top:592px;width:59px;height:27px;line-height:27px;">Slow</div><div class="t a13" style="left:130px;top:600px;">*</div><div class="b p a13" style="left:151px;top:592px;width:80px;height:27px;line-height:27px;">Hertz</div><div class="b r a13" style="left:231px;top:592px;width:80px;height:27px;line-height:27px;">RPM</div><div class="b r a13" style="left:311px;top:592px;width:80px;height:27px;line-height:27px;">msec</div><div class="b r a13" style="left:391px;top:592px;width:80px;height:27px;line-height:27px;">Total</div><div class="b r a13" style="left:471px;top:592px;width:80px;height:27px;line-height:27px;">SpecTot</div><div class="b r a13" style="left:561px;top:592px;width:80px;height:27px;line-height:27px;">Reset</div><div class="b r a13" style="left:641px;top:592px;width:50px;height:27px;line-height:27px;">Min</div><div class="b r a13" style="left:691px;top:592px;width:50px;height:27px;line-height:27px;">Max</div><div class="b r a13" style="left:751px;top:592px;width:50px;height:27px;line-height:27px;">Fcal</div><div class="b e a13" style="left:811px;top:592px;width:38px;height:27px;line-height:27px;text-align:left;padding-left:4px;box-sizing:border-box;line-height:22px;">3</div><div class="b r" style="left:833px;top:594px;width:16px;height:12px;line-height:12px;"><i class="up"></i></div><div class="b r" style="left:833px;top:606px;width:16px;height:12px;line-height:12px;"><i class="dn"></i></div><div class="t a13" style="left:856px;top:597px;">Plcs</div><div class="b e a13" style="left:897px;top:592px;width:69px;height:27px;line-height:27px;text-align:left;padding-left:4px;box-sizing:border-box;line-height:22px;">2</div><div class="b r" style="left:950px;top:594px;width:16px;height:12px;line-height:12px;"><i class="up"></i></div><div class="b r" style="left:950px;top:606px;width:16px;height:12px;line-height:12px;"><i class="dn"></i></div><div class="t a13" style="left:971px;top:597px;">Cyl</div>
<div class="t" style="left:0;top:618px;width:999px;text-align:center;font-size:74px;line-height:84px;left:-1.5px;">400.840</div>
</body></html>
